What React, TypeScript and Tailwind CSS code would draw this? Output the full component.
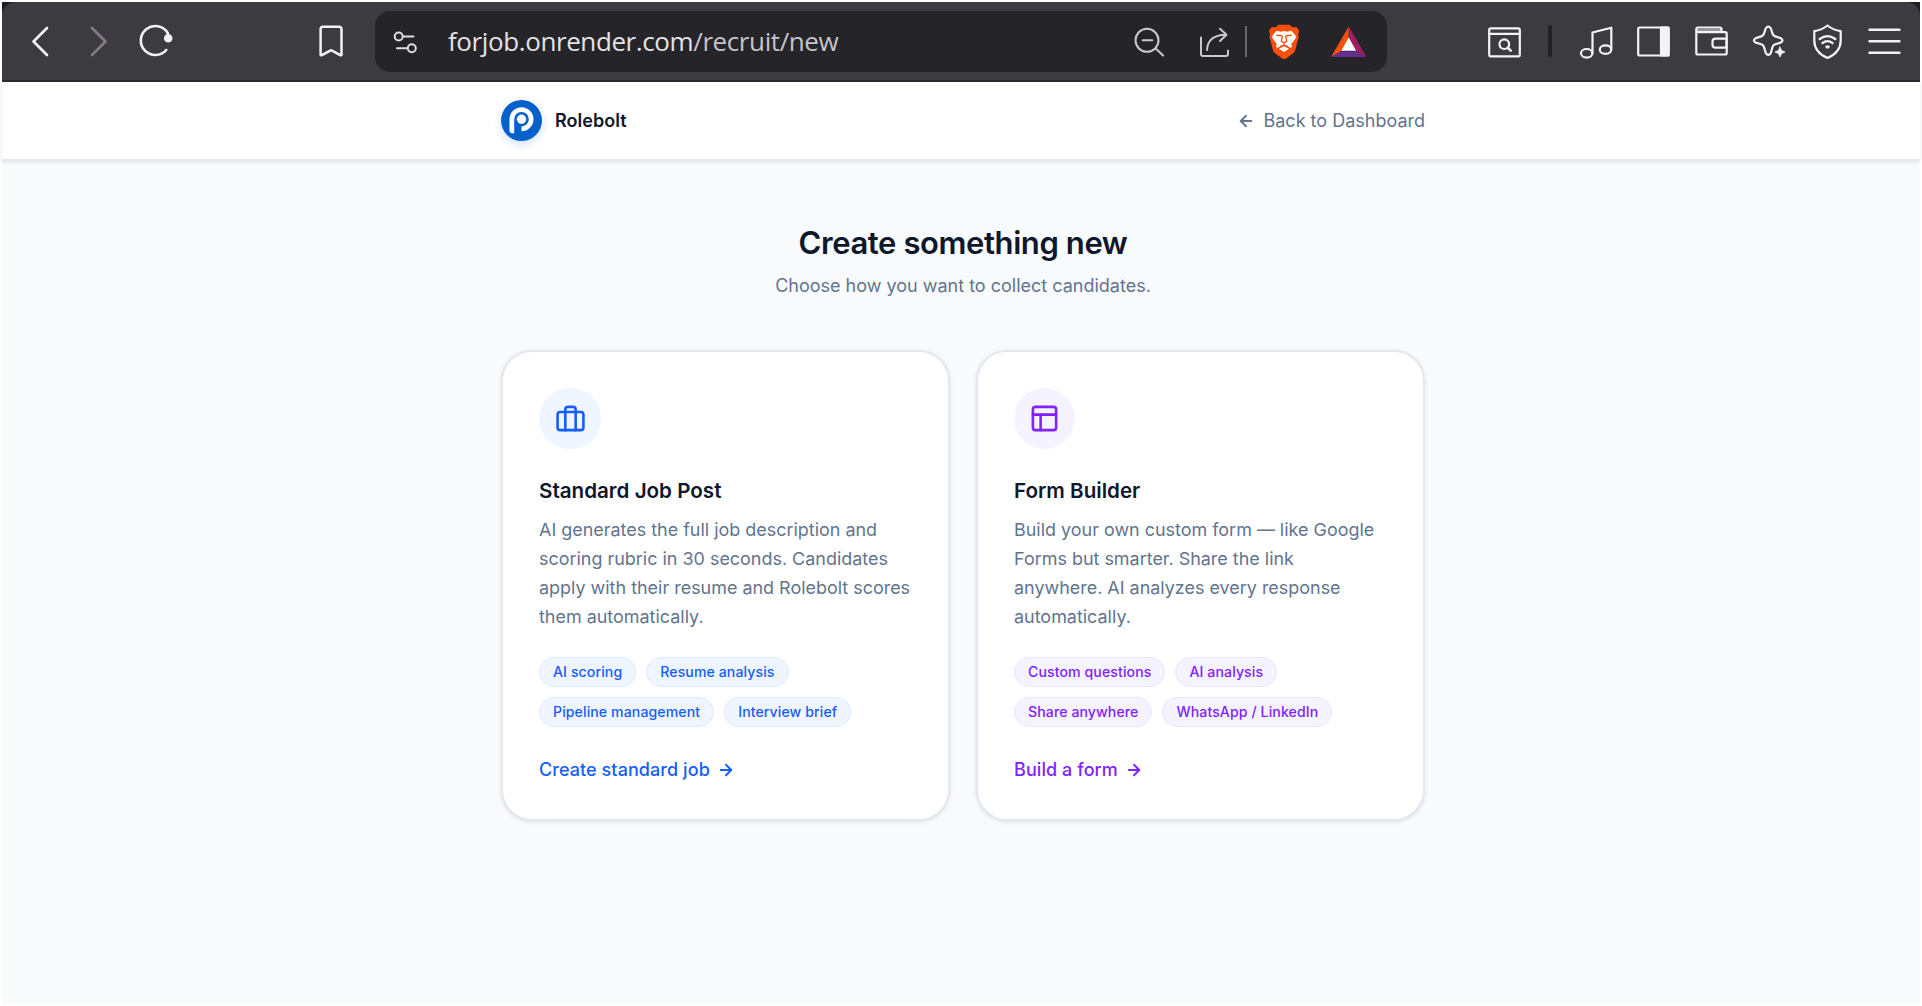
import type { ReactNode } from "react";
import { ArrowLeft, ArrowRight, PanelsTopLeft } from "lucide-react";
import clsx from "clsx";

interface IconProps {
  className?: string;
  strokeWidth?: number;
  children: ReactNode;
}

function BarIcon({ className, strokeWidth = 2.2, children }: IconProps) {
  return (
    <svg
      viewBox="0 0 40 40"
      fill="none"
      stroke="currentColor"
      strokeWidth={strokeWidth}
      strokeLinecap="round"
      strokeLinejoin="round"
      className={clsx("size-10 shrink-0", className)}
    >
      {children}
    </svg>
  );
}

function AddressBar() {
  return (
    <div className="ml-6 flex h-[61px] w-[1012px] shrink-0 items-center rounded-[15px] bg-[#252429] text-[#c9c8cc]">
      <BarIcon className="ml-[11px] text-[#dedde1]" strokeWidth={2}>
        <circle cx="12.7" cy="15.5" r="4" />
        <path d="M17.5 15.5H27.5" />
        <circle cx="25.8" cy="27.2" r="4" />
        <path d="M11 27.2H21" />
      </BarIcon>
      <p className="ml-[22px] w-[600px] font-['Open_Sans','Noto_Sans',sans-serif] text-[26px] leading-none tracking-[-0.4px] whitespace-nowrap text-[#e3e2e6]">
        forjob.onrender.com<span className="text-[#c4c3c9]">/recruit/new</span>
      </p>
      <BarIcon className="ml-[82px]" strokeWidth={2}>
        <circle cx="17" cy="19.3" r="11.5" />
        <path d="M12.7 19.3h9.6M25.7 27.6l7.4 7" />
      </BarIcon>
      <BarIcon className="ml-[25px]" strokeWidth={2}>
        <path d="M6 16.5V33a2 2 0 0 0 2 2h23a2 2 0 0 0 2-2v-3.5" />
        <path d="M12 29C12.5 19 18.5 14 30.5 13.7M25 7.7l6.5 6L25 20" />
      </BarIcon>
      <div className="ml-[10px] h-[31px] w-[2px] bg-[#68676d]" />
      {/* brave shield */}
      <svg viewBox="0 0 40 40" className="ml-[17px] size-10 shrink-0">
        <path
          d="M14.5 3.7h11l3 2.6 4-.3 2.8 4-1.2 3.6.7 2-3.6 13.6c-.4 1.6-1.4 2.8-2.6 3.6l-6.6 4.6c-1.2.9-2.6.9-3.8 0l-6.6-4.6c-1.2-.8-2.2-2-2.6-3.6L5.4 15.6l.7-2L4.9 10l2.8-4 4 .3z"
          fill="#fb4f0e"
        />
        <path
          d="M12.5 9.8l4.3.9 3.2-.7 3.2.7 4.3-.9 4.5 5.4-1 3-3.8 4.5.8 2.5-1.5 1.7-4.2-2.5-2.3-1.2-2.3 1.2-4.2 2.5-1.5-1.7.8-2.5L9 18.2l-1-3z"
          fill="#fff"
        />
        <path d="M15 27.7l5-2.5 5 2.5-5 3.4z" fill="#fff" />
        <path
          d="M12 14.3l5 .2 1.3 1-1 4.8 2.7 1.6 2.7-1.6-1-4.8 1.3-1 5-.2M20 21.8v2.5M16 25.5l4-1.5 4 1.5"
          fill="none"
          stroke="#fb4f0e"
          strokeWidth="1.3"
        />
      </svg>
      {/* BAT triangle */}
      <svg viewBox="0 0 40 40" className="ml-[25px] size-10 shrink-0">
        <path d="M19.7 5.5V17L12 30.2 2 36z" fill="#fb4f0e" />
        <path d="M19.7 5.5V17l7.7 13.2L37.5 36z" fill="#9e1f63" />
        <path d="M2 36l10-5.8h15.4L37.5 36z" fill="#662d91" />
        <path d="M19.7 16.5l7.5 13.2H12.3z" fill="#fff" />
      </svg>
    </div>
  );
}

function BrowserBar() {
  return (
    <div className="bg-[#211d28]">
      <div className="flex h-20 items-center rounded-t-[14px] border-b-2 border-[#2c2a31] bg-[#3c3b40] text-[#f3f3f5]">
        <BarIcon className="ml-[18px]" strokeWidth={2.7}>
          <path d="M27 7L13.5 20.5 27 34" />
        </BarIcon>
        <BarIcon className="ml-[18px] text-[#85798a]" strokeWidth={2.7}>
          <path d="M14 7l13.5 13.5L14 34" />
        </BarIcon>
        <BarIcon className="ml-[18px]" strokeWidth={2.6}>
          <path d="M30.3 29A14.5 14.5 0 1 1 31.7 12l.6 4" />
          <circle cx="32.2" cy="17.3" r="3" fill="currentColor" />
        </BarIcon>
        <BarIcon className="ml-[135px]" strokeWidth={2.5}>
          <path d="M12 5.7h16a2.5 2.5 0 0 1 2.5 2.5v25.2q0 1.4-1.3.8L21 29.6q-.9-.6-1.8 0l-8.3 4.6q-1.3.6-1.3-.8V8.2A2.5 2.5 0 0 1 12 5.7z" />
        </BarIcon>
        <AddressBar />
        <BarIcon className="ml-[97px]">
          <rect x="5.2" y="7.3" width="30.6" height="28" rx="1.5" />
          <path d="M5.2 12.8h30.6" />
          <circle cx="20.3" cy="23.2" r="4.8" />
          <path d="M24 27l2.7 2.7" strokeWidth="2.6" />
        </BarIcon>
        <div className="ml-6 h-8 w-1 rounded-full bg-[#221f28]" />
        <BarIcon className="ml-6">
          <ellipse cx="10.7" cy="32.3" rx="5.7" ry="4.3" />
          <ellipse cx="29.5" cy="28.6" rx="5.7" ry="4.3" />
          <path d="M16.5 32V11.5l18.8-4.8v22" />
        </BarIcon>
        <BarIcon className="ml-[17px]">
          <rect x="5.2" y="6.5" width="30.5" height="28" rx="1.5" />
          <path d="M28 6.5h7.5v28H28z" fill="currentColor" />
        </BarIcon>
        <BarIcon className="ml-[18px]">
          <path d="M30.5 11V8a1.5 1.5 0 0 0-1.5-1.5H6.8a1.5 1.5 0 0 0-1.5 1.5v24a1.5 1.5 0 0 0 1.5 1.5h27.4a1.5 1.5 0 0 0 1.5-1.5V12.7a1.5 1.5 0 0 0-1.5-1.5H5.5" />
          <path d="M5.5 9h25" strokeWidth="1" />
          <path d="M35.5 17.7h-11a3 3 0 0 0-3 3v3a3 3 0 0 0 3 3h11z" />
        </BarIcon>
        <BarIcon className="ml-[18px]">
          <path d="M16.7 7.5q2.6-3.8 5.2 0l1.6 5.2q.7 2 2.7 2.7l5.4 1.7q3.8 2.3 0 4.5l-5.4 1.7q-2 .7-2.7 2.7l-1.6 5.8q-2.6 4-5.2 0l-1.7-5.8q-.7-2-2.7-2.7l-5.5-1.7q-3.8-2.2 0-4.5l5.5-1.7q2-.7 2.7-2.7z" />
          <path
            d="M31 26l1.6 3.4L36 31l-3.4 1.6L31 36l-1.6-3.4L26 31l3.4-1.6z"
            fill="currentColor"
            strokeWidth=".8"
          />
        </BarIcon>
        <BarIcon className="ml-[18px]">
          <path d="M20.5 4.5c3.5 2.8 8 4.8 13.2 5.7v9.3c0 8-5 14-13.2 17.5C12.3 33.5 7.3 27.5 7.3 19.5v-9.3c5.2-.9 9.7-2.9 13.2-5.7z" />
          <path d="M12.7 18q7.8-5.7 15.6 0M15.5 22q5-3.7 10 0" strokeWidth="2.3" />
          <path d="M19.3 25.7q1.2-.7 2.4 0l-1.2.9z" />
        </BarIcon>
        <BarIcon className="ml-[17px]" strokeWidth={2.4}>
          <path d="M5.5 8.7h30M5.5 20.3h30M5.5 31.7h30" />
        </BarIcon>
      </div>
    </div>
  );
}

function Logo() {
  return (
    <div className="size-[41px] rounded-full shadow-[0_3px_10px_rgba(21,93,252,0.2)]">
      <svg viewBox="0 0 41 41" className="size-full">
        <circle cx="20.5" cy="20.5" r="20.5" fill="#0460cb" />
        <path
          d="M8.5 31.5V19.2a12 12 0 1 1 12 12v-4.7a7.3 7.3 0 1 0-7.3-7.3v14c-2.5.3-4.2-.5-4.7-1.7z"
          fill="#fff"
        />
        <circle cx="20.5" cy="19.2" r="4.7" fill="#fff" />
      </svg>
    </div>
  );
}

function BriefcaseIcon({ className }: { className?: string }) {
  return (
    <svg
      viewBox="0 0 24 24"
      fill="none"
      stroke="currentColor"
      strokeWidth="2"
      strokeLinecap="round"
      strokeLinejoin="round"
      className={className}
    >
      <rect x="2" y="7" width="20" height="14" rx="2" />
      <path d="M16 21V5a2 2 0 0 0-2-2h-4a2 2 0 0 0-2 2v16" />
    </svg>
  );
}

const options = [
  {
    id: "job",
    title: "Standard Job Post",
    text: "AI generates the full job description and scoring rubric in 30 seconds. Candidates apply with their resume and Rolebolt scores them automatically.",
    tags: ["AI scoring", "Resume analysis", "Pipeline management", "Interview brief"],
    action: "Create standard job",
    icon: <BriefcaseIcon className="size-[31px]" />,
    color: "text-[#155dfc]",
    iconBg: "w-[62px] bg-[#eff6ff]",
    tag: "border-[#dfe8ff] bg-[#eff6ff]",
  },
  {
    id: "form",
    title: "Form Builder",
    text: "Build your own custom form — like Google Forms but smarter. Share the link anywhere. AI analyzes every response automatically.",
    tags: ["Custom questions", "AI analysis", "Share anywhere", "WhatsApp / LinkedIn"],
    action: "Build a form",
    icon: <PanelsTopLeft className="size-[31px]" />,
    color: "text-[#7f22fe]",
    iconBg: "w-[61px] bg-[#f5f3ff]",
    tag: "border-[#e9e7ff] bg-[#f5f3ff]",
  },
];

export default function App() {
  return (
    <div className="min-h-[1006px] bg-white p-[2px] font-[Inter,sans-serif]">
      <BrowserBar />
      <div className="min-h-[922px] bg-[#f8fafc]">
        <header className="relative flex h-[79px] justify-center border-b-2 border-[#e2e8f0] bg-white pl-1 shadow-[0_1px_4px_rgba(0,0,0,0.1)]">
          <div className="flex w-[924px] items-center justify-between">
            <div className="flex items-center gap-[13px]">
              <Logo />
              <span className="text-[18px] font-semibold tracking-[0.05px] text-[#0f172b]">
                Rolebolt
              </span>
            </div>
            <a href="#" className="flex items-center gap-2 text-[18px] text-[#62748e]">
              <ArrowLeft className="size-[18px]" strokeWidth={2.5} />
              Back to Dashboard
            </a>
          </div>
        </header>

        <main className="flex flex-col items-center pt-[61px] pl-1">
          <h1 className="text-[31px] leading-[42px] font-semibold tracking-[-0.4px] text-[#0f172b]">
            Create something new
          </h1>
          <p className="mt-2 text-[18px] leading-[27px] text-[#62748e]">
            Choose how you want to collect candidates.
          </p>

          <div className="mt-[51px] grid w-[924px] grid-cols-2 gap-[26px]">
            {options.map((option) => (
              <div
                key={option.id}
                className="flex flex-col items-start rounded-[31px] border-2 border-[#e2e8f0] bg-white p-9 shadow-[0_1px_4px_rgba(0,0,0,0.1)]"
              >
                <div
                  className={clsx(
                    "flex h-[61px] items-center justify-center rounded-full",
                    option.color,
                    option.iconBg,
                  )}
                >
                  {option.icon}
                </div>
                <h2 className="mt-[26px] text-[20.6px] leading-[31px] font-semibold text-[#0f172b]">
                  {option.title}
                </h2>
                <p className="mt-[9px] text-[17.96px] leading-[29px] text-[#62748e]">
                  {option.text}
                </p>
                <div className="mt-[26px] flex flex-wrap gap-[10px]">
                  {option.tags.map((tag) => (
                    <span
                      key={tag}
                      className={clsx(
                        "flex h-[30px] items-center rounded-full border px-[13px] text-[14.1px] font-medium tracking-[0.1px]",
                        option.color,
                        option.tag,
                      )}
                    >
                      {tag}
                    </span>
                  ))}
                </div>
                <a
                  href="#"
                  className={clsx(
                    "mt-[30px] flex items-center gap-[7px] text-[18px] leading-[26px] font-medium tracking-[0.07px]",
                    option.color,
                  )}
                >
                  {option.action}
                  <ArrowRight className="size-[18px]" strokeWidth={2.5} />
                </a>
              </div>
            ))}
          </div>
        </main>
      </div>
    </div>
  );
}
